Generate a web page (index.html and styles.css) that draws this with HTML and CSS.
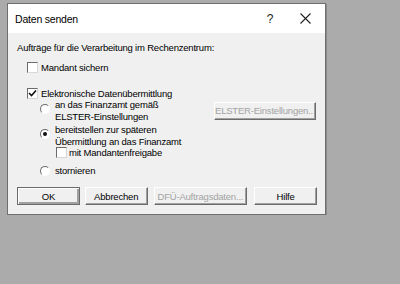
FILE: index.html
```html
<!DOCTYPE html>
<html lang="de">
<head>
    <meta charset="UTF-8">
    <title>Daten senden</title>
    <link rel="stylesheet" href="styles.css">
</head>
<body>
    <div class="dialog">
        <div class="titlebar">
            <span class="title">Daten senden</span>
            <span class="help">?</span>
            <span class="close">
                <svg width="11" height="11" viewBox="0 0 11 11"><path d="M0.5 0.5 L10.5 10.5 M10.5 0.5 L0.5 10.5" stroke="#222" stroke-width="1.1"/></svg>
            </span>
        </div>
        <div class="content">
            <div class="heading">Aufträge für die Verarbeitung im Rechenzentrum:</div>

            <label class="row level1 mandant">
                <span class="check"></span>
                <span>Mandant sichern</span>
            </label>

            <label class="row level1 elektro">
                <span class="check checked">
                    <svg width="9" height="9" viewBox="0 0 9 9"><path d="M1 4 L3.5 6.5 L8 1.5" fill="none" stroke="#111" stroke-width="1.6"/></svg>
                </span>
                <span>Elektronische Datenübermittlung</span>
            </label>

            <div class="option-line">
                <label class="row level2 two-line">
                    <span class="radio"></span>
                    <span>an das Finanzamt gemäß<br>ELSTER-Einstellungen</span>
                </label>
                <button class="btn disabled elster">ELSTER-Einstellungen...</button>
            </div>

            <label class="row level2 two-line">
                <span class="radio selected"></span>
                <span>bereitstellen zur späteren<br>Übermittlung an das Finanzamt</span>
            </label>

            <label class="row level3 freigabe">
                <span class="check"></span>
                <span>mit Mandantenfreigabe</span>
            </label>

            <label class="row level2 storno">
                <span class="radio"></span>
                <span>stornieren</span>
            </label>

            <div class="buttons">
                <button class="btn default">OK</button>
                <button class="btn">Abbrechen</button>
                <button class="btn disabled wide">DFÜ-Auftragsdaten...</button>
                <button class="btn">Hilfe</button>
            </div>
        </div>
    </div>
</body>
</html>
```

FILE: styles.css
```css
body {
    margin: 0;
    background: #ababab;
    font-family: "Liberation Sans", Arial, sans-serif;
    font-size: 9.5px;
    letter-spacing: -0.2px;
    color: #000;
}
.dialog {
    width: 317px;
    margin: 3px 0 0 7px;
    border: 1px solid #6f6f6f;
    background: #f0f0f0;
    box-shadow: 1px 1px 0 #8a8a8a;
}
.titlebar {
    display: flex;
    align-items: center;
    height: 29px;
    background: #fff;
    padding-left: 7px;
    font-size: 10.5px;
}
.title {
    flex: 1;
}
.help {
    width: 34px;
    text-align: center;
    color: #222;
    font-size: 12px;
}
.close {
    width: 36px;
    display: flex;
    justify-content: center;
    margin-right: 2px;
}
.content {
    padding: 8px 8px 9px 9px;
}
.heading {
    line-height: 13px;
}
.row {
    display: flex;
    align-items: center;
    line-height: 12px;
    white-space: nowrap;
}
.level1 {
    padding-left: 10px;
}
.level2 {
    padding-left: 23px;
}
.level3 {
    padding-left: 39px;
}
.mandant {
    margin-top: 7px;
    height: 13px;
}
.elektro {
    margin-top: 13px;
    height: 13px;
}
.option-line {
    display: flex;
    align-items: center;
    justify-content: space-between;
    margin-top: -2px;
}
.two-line {
    height: 24px;
    margin-top: 1px;
    align-items: flex-start;
}
.two-line .radio {
    margin-top: 5px;
}
.freigabe {
    margin-top: -2px;
    height: 13px;
}
.storno {
    margin-top: 5px;
    height: 13px;
}
.check {
    width: 9px;
    height: 9px;
    border: 1px solid;
    border-color: #6b6b6b #d8d8d8 #d8d8d8 #6b6b6b;
    background: #fff;
    margin-right: 3px;
    display: flex;
    align-items: center;
    justify-content: center;
}
.freigabe .check {
    margin-right: 2px;
}
.radio {
    flex: none;
    width: 8px;
    height: 8px;
    border: 1px solid;
    border-color: #6b6b6b #ffffff #ffffff #6b6b6b;
    border-radius: 50%;
    background: #fff;
    margin-right: 5px;
    position: relative;
}
.radio.selected::after {
    content: "";
    position: absolute;
    left: 2px;
    top: 2px;
    width: 4px;
    height: 4px;
    border-radius: 50%;
    background: #111;
}
.btn {
    height: 18px;
    width: 63px;
    padding: 0;
    font-family: inherit;
    font-size: 9.5px;
    letter-spacing: -0.2px;
    white-space: nowrap;
    background: #f0f0f0;
    border: 1px solid;
    border-color: #ffffff #6b6b6b #6b6b6b #ffffff;
    box-shadow: inset -1px -1px 0 #a0a0a0;
    color: #000;
}
.btn.default {
    border-color: #6b6b6b;
    box-shadow: inset 1px 1px 0 #fff, inset -2px -2px 0 #a0a0a0;
}
.btn.disabled {
    color: #a3a3a3;
}
.elster {
    width: 102px;
    margin-right: 1px;
}
.buttons {
    display: flex;
    gap: 5px;
    margin-top: 10px;
}
.buttons .wide {
    width: 94px;
    margin: 0 2px 0 1px;
}
```
